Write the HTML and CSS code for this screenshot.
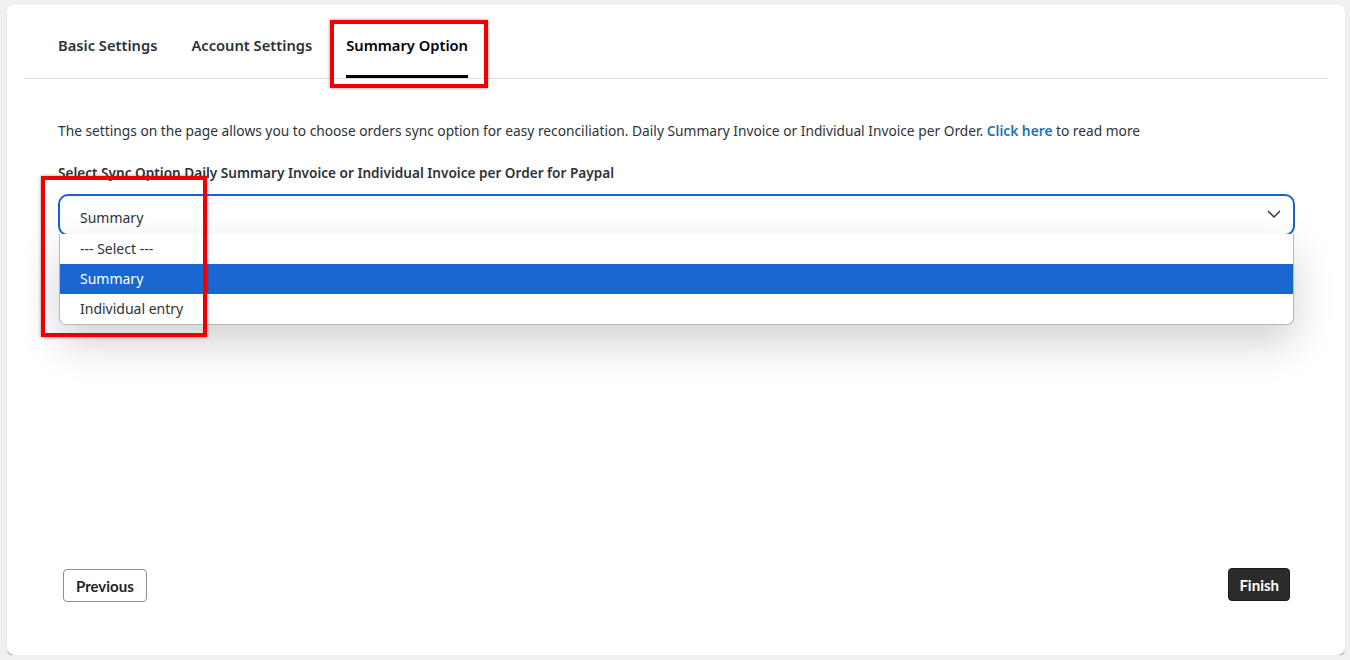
FILE: index.html
```html
<!DOCTYPE html>
<html lang="en">

<head>
    <meta charset="UTF-8">
    <meta name="viewport" content="width=device-width, initial-scale=1.0">
    <title>Summary Option</title>
    <link rel="stylesheet" href="styles.css">
</head>

<body>
    <div class="card">
        <ul class="tabs">
            <li class="tab">Basic Settings</li>
            <li class="tab">Account Settings</li>
            <li class="tab active">Summary Option<span class="mark mark-tab"></span></li>
        </ul>

        <div class="content">
            <p class="intro">The settings on the page allows you to choose orders sync option for easy reconciliation. Daily Summary Invoice or Individual Invoice per Order. <a href="#">Click here</a> to read more</p>

            <label class="field-label">Select Sync Option Daily Summary Invoice or Individual Invoice per Order for Paypal</label>

            <div class="select-wrap">
                <div class="select">
                    <span>Summary</span>
                    <svg class="chevron" width="14" height="8" viewBox="0 0 14 8">
                        <path d="M1 1l6 6 6-6" fill="none" stroke="#2c3338" stroke-width="1.4" />
                    </svg>
                </div>
                <ul class="options">
                    <li class="option">--- Select ---</li>
                    <li class="option selected">Summary</li>
                    <li class="option">Individual entry</li>
                </ul>
                <span class="mark mark-select"></span>
            </div>
        </div>

        <div class="footer">
            <button class="button">Previous</button>
            <button class="button button-dark">Finish</button>
        </div>
    </div>
</body>

</html>
```

FILE: styles.css
```css
* {
    box-sizing: border-box;
}

body {
    font-family: 'Noto Sans', 'Open Sans', sans-serif;
    background-color: #f0f0f1;
    color: #2c3338;
    margin: 0;
    padding: 5px 5px 0 7px;
}

.card {
    background-color: #fff;
    border-radius: 8px;
    height: 650px;
    padding: 0 17px;
    box-shadow: 0 3px 2px -1px #9a9a9a;
    display: flex;
    flex-direction: column;
}

.tabs {
    list-style: none;
    margin: 0;
    padding: 0 0 0 17px;
    display: flex;
    border-bottom: 1px solid #dcdcde;
}

.tab {
    position: relative;
    padding: 29px 17px 22px;
    font-size: 14.7px;
    font-weight: 600;
    color: #2c3338;
    line-height: 22px;
}

.tab.active {
    color: #000;
}

.tab.active::after {
    content: '';
    position: absolute;
    left: 17px;
    right: 17px;
    bottom: 0;
    height: 3px;
    background-color: #000;
}

.content {
    padding: 40px 33px 0 34px;
    flex: 1;
}

.intro {
    font-size: 13.75px;
    margin: 0 0 20px;
    line-height: 24px;
}

.intro a {
    color: #2271b1;
    font-weight: 600;
    text-decoration: none;
}

.field-label {
    display: block;
    font-size: 13.6px;
    font-weight: 600;
    line-height: 20px;
    margin-bottom: 11px;
}

.select-wrap {
    position: relative;
}

.select {
    height: 42px;
    border: 2px solid #1a5fd4;
    border-radius: 10px;
    display: flex;
    align-items: center;
    justify-content: space-between;
    padding: 4px 12px 0 20px;
    font-size: 14px;
}

.chevron {
    margin-top: -6px;
}

.options {
    position: absolute;
    top: 40px;
    left: 1px;
    right: 1px;
    list-style: none;
    margin: 0;
    padding: 0;
    background-color: #fff;
    border: 1px solid #b8b8b8;
    border-top: 0;
    border-radius: 0 0 7px 7px;
    box-shadow: 0 18px 40px rgba(0, 0, 0, 0.18);
    overflow: hidden;
}

.option {
    height: 30px;
    line-height: 30px;
    padding-left: 20px;
    font-size: 14px;
}

.option.selected {
    background-color: #1a67d2;
    color: #fff;
}

.footer {
    display: flex;
    justify-content: space-between;
    align-items: flex-start;
    padding: 0 38px 53px 39px;
}

.button {
    font-family: 'Lato', sans-serif;
    font-size: 15px;
    font-weight: bold;
    color: #1d2327;
    background-color: #fff;
    border: 1px solid #8c8f94;
    border-radius: 4px;
    height: 33px;
    padding: 0 12px;
}

.button-dark {
    background-color: #2b2b2b;
    border-color: #1a1a1a;
    color: #fff;
    padding: 0 10px;
    margin-top: -1px;
}

.mark {
    position: absolute;
    border: 4px solid #ee0000;
    box-shadow: 0 0 3px rgba(120, 0, 0, 0.5);
    pointer-events: none;
}

.mark-tab {
    left: 1px;
    right: -3px;
    top: 15px;
    bottom: -10px;
}

.mark-select {
    left: -17px;
    top: -18px;
    width: 166px;
    height: 161px;
}
```
